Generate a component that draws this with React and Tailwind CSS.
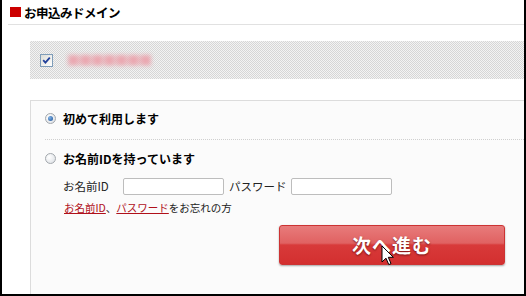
const font = { fontFamily: '"Noto Sans CJK JP", "Liberation Sans", sans-serif' };

function Radio({ checked }) {
  return (
    <span className="flex h-[11px] w-[11px] shrink-0 items-center justify-center rounded-full border border-[#a3a8ad] bg-[radial-gradient(circle_at_35%_35%,#ffffff,#d9dde2)]">
      {checked && (
        <span className="h-[5px] w-[5px] rounded-full bg-[radial-gradient(circle_at_35%_35%,#7fb3e8,#1b4f94)]" />
      )}
    </span>
  );
}

function Cursor() {
  return (
    <svg className="absolute left-[102px] top-[20px]" width="13" height="21" viewBox="0 0 13 21">
      <path
        d="M1 1 L1 17 L5 13.2 L7.8 19.6 L10 18.6 L7.3 12.3 L12.4 12.3 Z"
        fill="#fff"
        stroke="#000"
        strokeWidth="1"
        strokeLinejoin="round"
      />
    </svg>
  );
}

export default function App() {
  return (
    <div
      style={font}
      className="relative flex h-[296px] w-[526px] flex-col overflow-hidden border-b-2 border-l-2 border-r-2 border-black bg-white text-black"
    >
      {/* heading */}
      <div className="ml-[6px] flex h-[25px] items-start border-b border-[#e1e1e1] pl-[2px] pt-[6px]">
        <span className="mt-[1px] h-[10px] w-[11px] bg-[#cc0000]" />
        <span className="ml-[3px] text-[12.5px] font-bold leading-[13px] tracking-[-0.5px]">
          お申込みドメイン
        </span>
      </div>

      {/* selected domain */}
      <div className="ml-[28px] mt-[16px] flex h-[38px] items-center bg-[conic-gradient(#d6d6d6_25%,#f3f3f3_0_50%,#d6d6d6_0_75%,#f3f3f3_0)] bg-[length:2px_2px] pl-[10px]">
        <span className="flex h-[13px] w-[13px] items-center justify-center border border-[#7f9db9] bg-[linear-gradient(135deg,#dcdcd6,#ffffff)]">
          <svg width="9" height="9" viewBox="0 0 9 9">
            <path d="M1.2 4.2 L3.4 6.6 L7.8 1.6" fill="none" stroke="#21409a" strokeWidth="1.8" />
          </svg>
        </span>
        <span className="ml-[14px] select-none text-[13px] font-bold leading-[14px] tracking-[-1px] text-[#eaa7b0] blur-[2px]">
          ■■■■■■■
        </span>
      </div>

      {/* login panel */}
      <div className="ml-[28px] mt-[21px] flex-1 border-l border-t border-[#dcdcdc] bg-[#fbfbfb] pl-[14px]">
        <div className="flex h-[38px] items-start gap-[7px] pt-[12px]">
          <Radio checked />
          <span className="-mt-[1px] text-[12px] font-bold leading-[14px]">初めて利用します</span>
        </div>
        <div className="border-t border-dotted border-[#cfcfcf]" />
        <div className="flex items-start gap-[7px] pt-[13px]">
          <Radio />
          <span className="-mt-[1px] text-[12px] font-bold leading-[14px]">お名前IDを持っています</span>
        </div>

        <div className="mt-[12px] flex items-center pl-[18px] text-[11.5px] leading-[17px] text-[#222]">
          <span className="w-[60px]">お名前ID</span>
          <span className="h-[17px] w-[101px] rounded-[2px] border border-[#bdbdbd] bg-white" />
          <span className="ml-[5px] w-[62px]">パスワード</span>
          <span className="h-[17px] w-[101px] rounded-[2px] border border-[#bdbdbd] bg-white" />
        </div>

        <div className="mt-[6px] pl-[19px] text-[10.5px] leading-[14px] text-[#222]">
          <span className="text-[#b0101a] underline">お名前ID</span>、
          <span className="text-[#b0101a] underline">パスワード</span>をお忘れの方
        </div>

        <div className="relative ml-[234px] mt-[10px] h-[40px] w-[226px]">
          <div className="flex h-full w-full items-center justify-center overflow-hidden rounded-[3px] border border-[#c33] bg-[linear-gradient(#e87b7b_0%,#e06262_45%,#d83a3a_50%,#d32f2f_100%)] shadow-[0_1px_2px_rgba(0,0,0,0.35)]">
            <span className="text-[19px] font-bold leading-[20px] tracking-[1px] text-white [text-shadow:0_1px_2px_rgba(80,0,0,0.7)]">
              次へ進む
            </span>
          </div>
          <Cursor />
        </div>
      </div>
    </div>
  );
}
